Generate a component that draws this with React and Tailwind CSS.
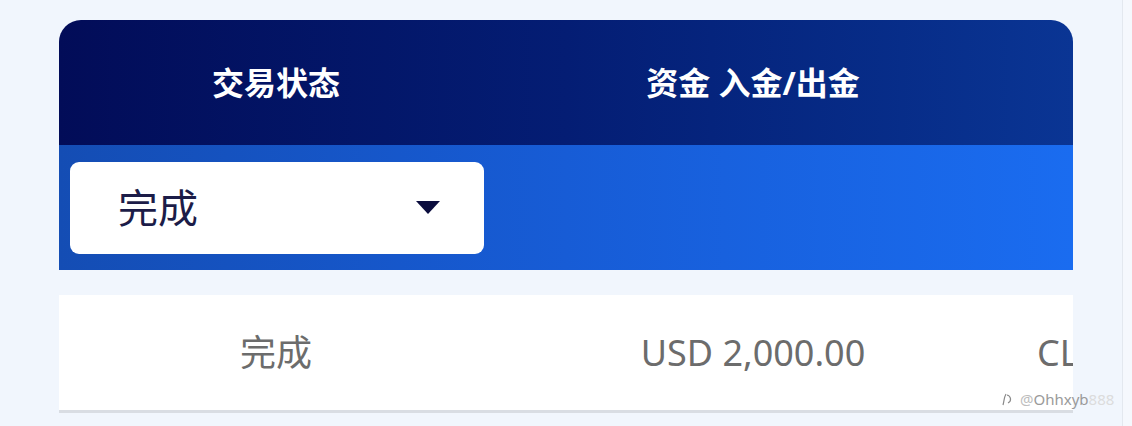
import { useState } from 'react'

const cjk = { fontFamily: '"Noto Sans", "Noto Sans CJK SC", sans-serif' }

export default function App() {
  const [status] = useState('完成')

  return (
    <div className="relative h-[426px] w-[1132px] overflow-hidden bg-[#f1f6fd]" style={cjk}>
      <div className="flex h-full">
        <div className="w-[1122px] pl-[59px] pr-[49px] pt-[20px]">
          {/* table card */}
          <div className="overflow-hidden rounded-t-[22px]">
            {/* header */}
            <div className="flex h-[125px] items-center bg-gradient-to-r from-[#020c58] via-[#041d74] to-[#0a3594] text-[32px] font-bold text-white">
              <div className="w-[434px] shrink-0 text-center">交易状态</div>
              <div className="w-[520px] shrink-0 text-center">资金 入金/出金</div>
            </div>

            {/* filter row */}
            <div className="flex h-[125px] items-center bg-gradient-to-r from-[#144db4] via-[#175cd6] to-[#1a6cf0] px-[11px]">
              <button className="flex h-[92px] w-[414px] items-center justify-between rounded-[9px] bg-white pl-[48px] pr-[44px]">
                <span className="text-[40px] text-[#1c1c48]">{status}</span>
                <svg width="24" height="13" viewBox="0 0 24 13">
                  <path d="M0 0h24L12 13z" fill="#0b0d3e" />
                </svg>
              </button>
            </div>
          </div>

          {/* data row */}
          <div className="mt-[25px] flex h-[118px] items-center overflow-hidden border-b-[3px] border-[#d9dde3] bg-white text-[36px] text-[#6c6c6c]">
            <div className="w-[434px] shrink-0 text-center">完成</div>
            <div className="w-[520px] shrink-0 text-center">USD 2,000.00</div>
            <div className="w-[200px] shrink-0 pl-[24px]">CLOSED</div>
          </div>
        </div>
        <div className="w-px bg-[#e3e8ef]" />
        <div className="flex-1 bg-[#f5f8fd]" />
      </div>

      {/* watermark */}
      <div className="absolute left-[1000px] top-[388px] flex items-center gap-[6px] text-[15px] text-[#9a9a9a]">
        <svg width="14" height="16" viewBox="0 0 14 16" fill="none" stroke="#8a8a8a" strokeWidth="1.2">
          <path d="M3 14c1-3 1-8 3-11" />
          <path d="M7 4c4 1 5 6 1 8" />
        </svg>
        <span>
          <span className="text-[#bdbdbd]">@</span>Ohhxyb<span className="text-[#dcdcdc]">888</span>
        </span>
      </div>
    </div>
  )
}
